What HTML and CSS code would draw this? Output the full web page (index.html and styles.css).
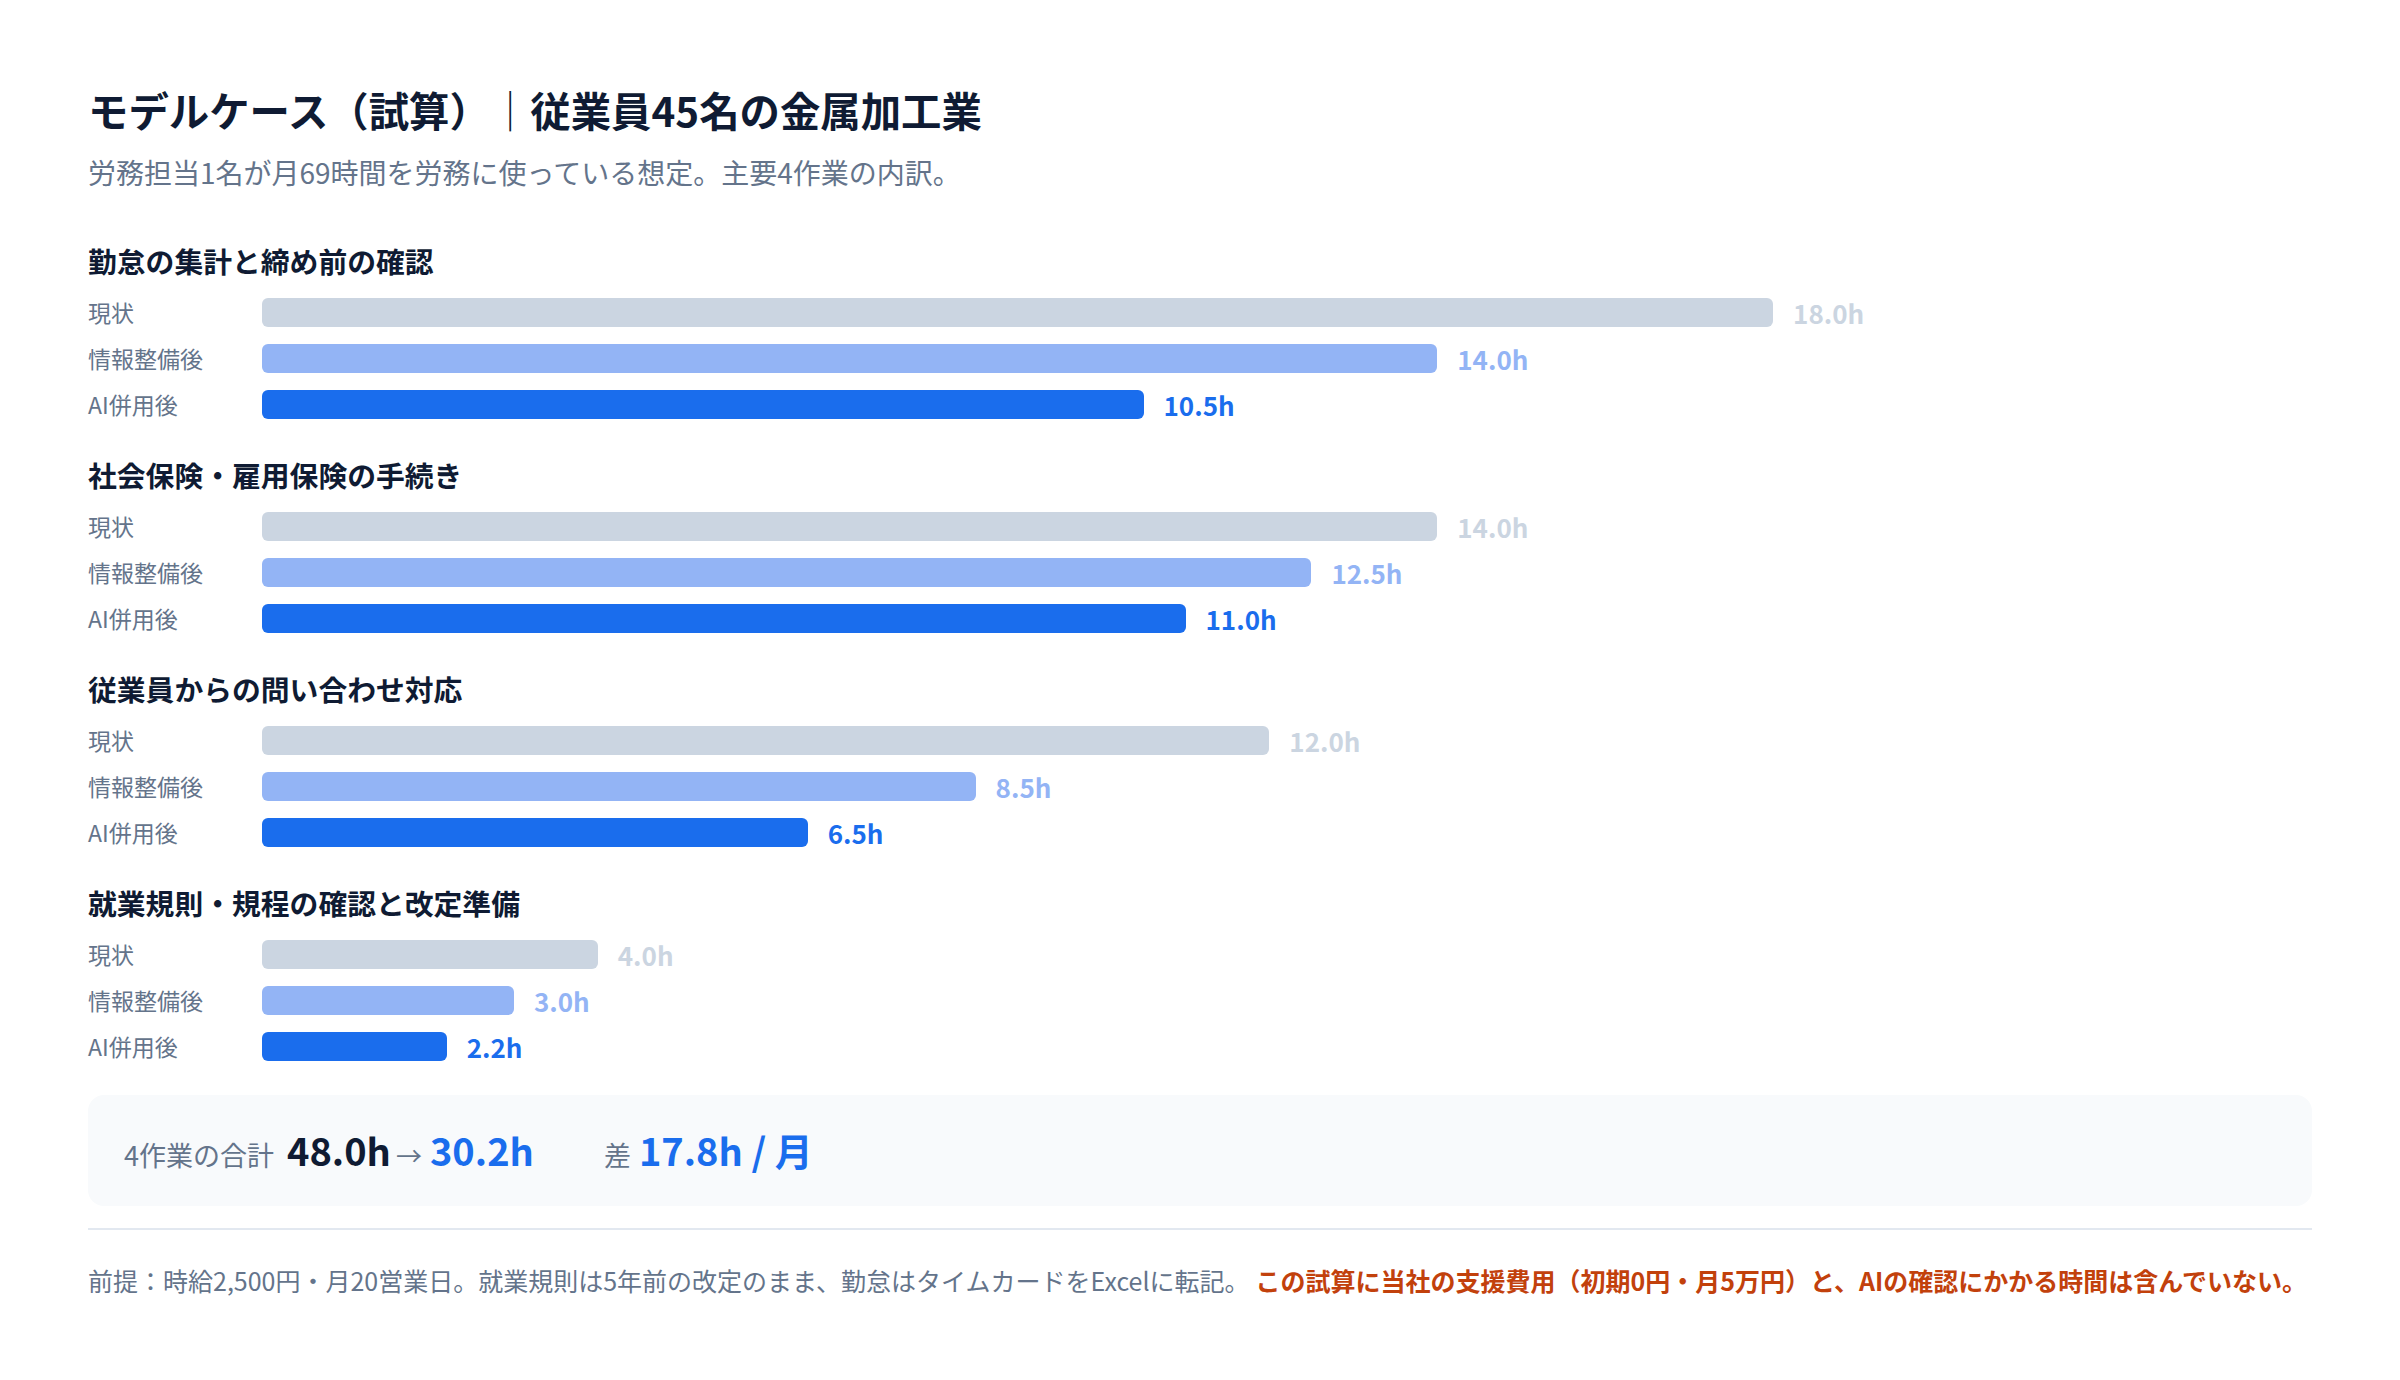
FILE: index.html
```html
<!DOCTYPE html>
<html lang="ja">
<head>
<meta charset="utf-8">
<title>モデルケース（試算）</title>
<link rel="stylesheet" href="styles.css">
</head>
<body>
<main class="page">
  <header class="intro">
    <h1 class="title">モデルケース（試算）<span class="sep">｜</span>従業員45名の金属加工業</h1>
    <p class="lead">労務担当1名が月69時間を労務に使っている想定。主要4作業の内訳。</p>
  </header>

  <section class="chart">
    <div class="task">
      <h2 class="task-title">勤怠の集計と締め前の確認</h2>
      <div class="rows">
        <div class="row"><span class="row-label">現状</span><div class="track"><div class="bar bar-now" style="width:73.71%"></div><span class="val val-now">18.0h</span></div></div>
        <div class="row"><span class="row-label">情報整備後</span><div class="track"><div class="bar bar-info" style="width:57.33%"></div><span class="val val-info">14.0h</span></div></div>
        <div class="row"><span class="row-label">AI併用後</span><div class="track"><div class="bar bar-ai" style="width:43.0%"></div><span class="val val-ai">10.5h</span></div></div>
      </div>
    </div>

    <div class="task">
      <h2 class="task-title">社会保険・雇用保険の手続き</h2>
      <div class="rows">
        <div class="row"><span class="row-label">現状</span><div class="track"><div class="bar bar-now" style="width:57.33%"></div><span class="val val-now">14.0h</span></div></div>
        <div class="row"><span class="row-label">情報整備後</span><div class="track"><div class="bar bar-info" style="width:51.19%"></div><span class="val val-info">12.5h</span></div></div>
        <div class="row"><span class="row-label">AI併用後</span><div class="track"><div class="bar bar-ai" style="width:45.05%"></div><span class="val val-ai">11.0h</span></div></div>
      </div>
    </div>

    <div class="task">
      <h2 class="task-title">従業員からの問い合わせ対応</h2>
      <div class="rows">
        <div class="row"><span class="row-label">現状</span><div class="track"><div class="bar bar-now" style="width:49.14%"></div><span class="val val-now">12.0h</span></div></div>
        <div class="row"><span class="row-label">情報整備後</span><div class="track"><div class="bar bar-info" style="width:34.81%"></div><span class="val val-info">8.5h</span></div></div>
        <div class="row"><span class="row-label">AI併用後</span><div class="track"><div class="bar bar-ai" style="width:26.62%"></div><span class="val val-ai">6.5h</span></div></div>
      </div>
    </div>

    <div class="task">
      <h2 class="task-title">就業規則・規程の確認と改定準備</h2>
      <div class="rows">
        <div class="row"><span class="row-label">現状</span><div class="track"><div class="bar bar-now" style="width:16.38%"></div><span class="val val-now">4.0h</span></div></div>
        <div class="row"><span class="row-label">情報整備後</span><div class="track"><div class="bar bar-info" style="width:12.29%"></div><span class="val val-info">3.0h</span></div></div>
        <div class="row"><span class="row-label">AI併用後</span><div class="track"><div class="bar bar-ai" style="width:9.01%"></div><span class="val val-ai">2.2h</span></div></div>
      </div>
    </div>
  </section>

  <div class="summary">
    <span class="sum-label">4作業の合計</span>
    <strong class="sum-num sum-before">48.0h</strong>
    <span class="sum-arrow">→</span>
    <strong class="sum-num sum-after">30.2h</strong>
    <span class="sum-label sum-diff-label">差</span>
    <strong class="sum-num sum-diff">17.8h / 月</strong>
  </div>

  <hr class="divider">

  <p class="note">前提：時給2,500円・月20営業日。就業規則は5年前の改定のまま、勤怠はタイムカードをExcelに転記。<strong class="note-warn">この試算に当社の支援費用（初期0円・月5万円）と、AIの確認にかかる時間は含んでいない。</strong></p>
</main>
</body>
</html>
```

FILE: styles.css
```css
* {
  box-sizing: border-box;
}

html, body {
  margin: 0;
  padding: 0;
  background: #ffffff;
}

body {
  font-family: "Noto Sans CJK JP", "Noto Sans", sans-serif;
  color: #0f1b33;
}

.page {
  padding: 84px 88px 40px;
}

.intro {
  margin: 0;
}

.title {
  margin: 0;
  font-size: 40.4px;
  line-height: 52px;
  font-weight: 700;
  color: #0f1b33;
}

.sep {
  font-weight: 400;
  color: #0f1b33;
}

.lead {
  margin: 16px 0 0;
  font-size: 28px;
  line-height: 40px;
  color: #64748b;
}

.chart {
  margin-top: 49px;
  display: flex;
  flex-direction: column;
  gap: 36px;
}

.task-title {
  margin: 0 0 17px;
  font-size: 28.8px;
  line-height: 40px;
  font-weight: 700;
  color: #0f1b33;
}

.rows {
  display: flex;
  flex-direction: column;
  gap: 17px;
}

.row {
  display: grid;
  grid-template-columns: 174px 1fr;
  align-items: center;
  height: 29px;
}

.row-label {
  font-size: 23px;
  line-height: 29px;
  color: #64748b;
  white-space: nowrap;
}

.track {
  display: flex;
  align-items: center;
  height: 29px;
}

.bar {
  height: 29px;
  border-radius: 6px;
  flex: none;
}

.bar-now { background: #cbd5e1; }
.bar-info { background: #93b4f5; }
.bar-ai { background: #1a6ded; }

.val {
  margin-left: 20px;
  font-size: 26px;
  line-height: 29px;
  font-weight: 700;
  white-space: nowrap;
}

.val-now { color: #cbd5e1; }
.val-info { color: #93b4f5; }
.val-ai { color: #1a6ded; }

.summary {
  margin-top: 34px;
  height: 111px;
  padding: 30px 36px 31px;
  background: #f8fafc;
  border-radius: 16px;
  display: flex;
  align-items: baseline;
  white-space: nowrap;
}

.sum-label {
  font-size: 27px;
  line-height: 50px;
  color: #64748b;
}

.sum-num {
  font-size: 38px;
  line-height: 50px;
  font-weight: 700;
}

.sum-before {
  margin-left: 13px;
  color: #0f1b33;
}

.sum-arrow {
  margin: 0 8px 0 5px;
  font-size: 26px;
  line-height: 50px;
  color: #64748b;
}

.sum-after {
  color: #1a6ded;
}

.sum-diff-label {
  margin-left: 70px;
}

.sum-diff {
  margin-left: 8px;
  color: #1a6ded;
}

.divider {
  margin: 22px 0 0;
  border: 0;
  height: 2px;
  background: #e2e8f0;
}

.note {
  margin: 32px 0 0;
  font-size: 25px;
  line-height: 36px;
  color: #64748b;
  white-space: nowrap;
}

.note-warn {
  margin-left: 6px;
  font-weight: 700;
  color: #c2410c;
}
```
